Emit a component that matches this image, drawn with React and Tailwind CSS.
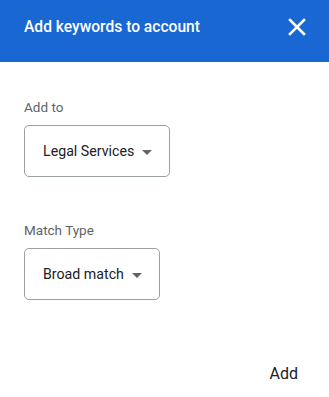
import React from 'react';

const Select = ({ value }) => (
    <div className="inline-flex items-center h-[52px] pl-[18px] pr-[17px] pt-[2px] border border-[#9aa0a6] rounded-[5px] text-[14.2px] text-[#202124]">
        <span>{value}</span>
        <svg width="10" height="5" viewBox="0 0 10 5" className="ml-[8px]">
            <path d="M0 0 L10 0 L5 5 Z" fill="#5f6368" />
        </svg>
    </div>
);

const App = () => {
    return (
        <div className="w-[329px] h-[397px] bg-white flex flex-col" style={{ fontFamily: 'Roboto, "Liberation Sans", sans-serif' }}>
            <div className="h-[62px] bg-[#1967d2] flex items-start justify-between pl-6 pr-[22px] pt-[17px]">
                <h2 className="text-[15.6px] leading-5 font-medium text-white">Add keywords to account</h2>
                <svg width="20" height="20" viewBox="0 0 20 20">
                    <path d="M3 3 L17 17 M17 3 L3 17" stroke="white" strokeWidth="2.6" strokeLinecap="square" />
                </svg>
            </div>

            <div className="px-6 flex flex-col items-start">
                <div className="mt-[37px] text-[13.5px] leading-4 text-[#5f6368]">Add to</div>
                <div className="mt-[10px]">
                    <Select value="Legal Services" />
                </div>

                <div className="mt-[45px] text-[13.5px] leading-4 text-[#5f6368]">Match Type</div>
                <div className="mt-[10px]">
                    <Select value="Broad match" />
                </div>
            </div>

            <div className="flex justify-end pr-[31px] mt-[64px]">
                <button className="text-[16px] leading-5 text-[#202124]">Add</button>
            </div>
        </div>
    );
};

export default App;
